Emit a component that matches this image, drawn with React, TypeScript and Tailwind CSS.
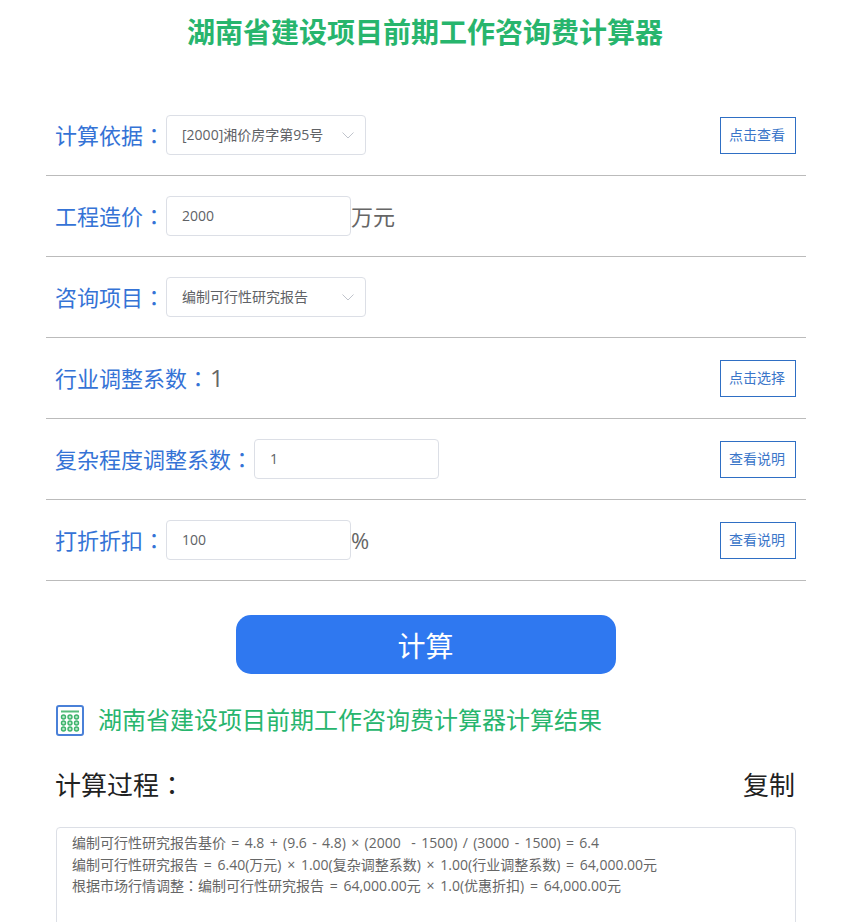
const font = "[font-family:'Open_Sans','Noto_Sans_CJK_SC',sans-serif]";

// full-width colon sits centred in the reference, the TC face draws it that way
function Colon() {
  return <span className="leading-none [font-family:'Noto_Sans_CJK_TC',sans-serif]">：</span>;
}

function Chevron() {
  return (
    <svg width="14" height="14" viewBox="0 0 14 14" fill="none" className="ml-auto">
      <path d="M1.5 4.5 L7 10 L12.5 4.5" stroke="#c0c4cc" strokeWidth="1" />
    </svg>
  );
}

function SelectBox({ value }: { value: string }) {
  return (
    <div className="flex h-10 w-[200px] items-center rounded border border-[#dcdfe6] bg-white pl-[15px] pr-[10px] text-sm text-[#606266]">
      <span>{value}</span>
      <Chevron />
    </div>
  );
}

function TextBox({ value }: { value: string }) {
  return (
    <input
      defaultValue={value}
      readOnly
      className="h-10 w-[185px] rounded border border-[#dcdfe6] bg-white px-[15px] pb-[2px] text-sm text-[#606266] outline-none"
    />
  );
}

function SideButton({ label }: { label: string }) {
  return (
    <button className="ml-auto h-[37px] w-[76px] border border-[#2f6fc4] bg-white pr-[2px] text-sm text-[#3b76c9]">
      {label}
    </button>
  );
}

function Row({ label, children, action }: { label: string; children?: React.ReactNode; action?: string }) {
  return (
    <div className="flex h-[81px] items-center border-b border-[#bbbbbb] px-2.5">
      <span className="-ml-px mr-px text-[22px] whitespace-nowrap text-[#3573d6]">
        {label}
        <Colon />
      </span>
      {children}
      {action && <SideButton label={action} />}
    </div>
  );
}

function CalcIcon() {
  return (
    <svg width="28" height="31" viewBox="0 0 28 31" fill="none">
      <rect x="1" y="1" width="26" height="29" rx="2" fill="#fff" stroke="#4a80d8" strokeWidth="2" />
      <rect x="5" y="5.5" width="18" height="2" fill="#57bd7c" />
      {[12, 18, 24].map((y) =>
        [7.5, 14, 20.5].map((x) => (
          <circle key={`${x}-${y}`} cx={x} cy={y} r="2" fill="#b9e6c9" stroke="#3db36b" strokeWidth="1.4" />
        ))
      )}
    </svg>
  );
}

export default function App() {
  return (
    <div className={`h-[922px] w-[846px] overflow-hidden bg-white ${font}`}>
      <div className="ml-[46px] w-[760px]">
        <h1 className="flex h-[95px] items-start justify-center pt-[12px] pr-[2px] text-[28px] leading-10 font-bold text-[#27b56d]">
          湖南省建设项目前期工作咨询费计算器
        </h1>

        <Row label="计算依据" action="点击查看">
          <SelectBox value="[2000]湘价房字第95号" />
        </Row>
        <Row label="工程造价">
          <TextBox value="2000" />
          <span className="text-[22px] text-[#666666]">万元</span>
        </Row>
        <Row label="咨询项目">
          <SelectBox value="编制可行性研究报告" />
        </Row>
        <Row label="行业调整系数" action="点击选择">
          <span className="text-2xl text-[#666666]">1</span>
        </Row>
        <Row label="复杂程度调整系数" action="查看说明">
          <TextBox value="1" />
        </Row>
        <Row label="打折折扣" action="查看说明">
          <TextBox value="100" />
          <span className="text-[22px] text-[#666666]">%</span>
        </Row>

        <button className="mx-auto mt-[34px] block h-[59px] w-[380px] rounded-[15px] bg-[#2f78f0] pt-[2px] pr-[1px] text-[28px] text-white">
          计算
        </button>

        <div className="mt-[30px] flex items-center gap-[14px] px-2.5">
          <CalcIcon />
          <span className="text-2xl text-[#27b56d]">湖南省建设项目前期工作咨询费计算器计算结果</span>
        </div>

        <div className="mt-[31px] flex h-9 items-center justify-between pr-[11px] pl-[9px] text-[26px] text-[#222222]">
          <span>
            计算过程
            <Colon />
          </span>
          <span>复制</span>
        </div>

        <div className="mx-2.5 mt-[24px] h-[200px] rounded border border-[#dcdfe6] px-[15px] py-[4px] text-sm leading-[21.5px] whitespace-pre-wrap text-[#666666]">
          <div className="[word-spacing:1.7px]">编制可行性研究报告基价 = 4.8 + (9.6 - 4.8) × (2000  - 1500) / (3000 - 1500) = 6.4</div>
          <div className="[word-spacing:2.1px]">编制可行性研究报告 = 6.40(万元) × 1.00(复杂调整系数) × 1.00(行业调整系数) = 64,000.00元</div>
          <div className="[word-spacing:2.1px]">
            根据市场行情调整
            <Colon />
            编制可行性研究报告 = 64,000.00元 × 1.0(优惠折扣) = 64,000.00元
          </div>
        </div>
      </div>
    </div>
  );
}
